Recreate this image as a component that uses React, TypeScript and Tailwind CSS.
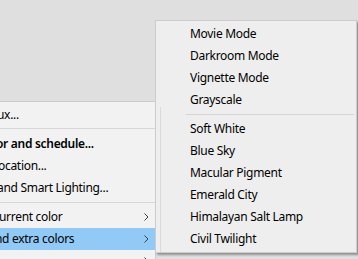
const mainItems = [
  { label: "ux...", kind: "item", indent: -3 },
  { kind: "sep", line: 2 },
  { label: "or and schedule...", kind: "item", bold: true, indent: -4 },
  { label: "ocation...", kind: "item", indent: -2 },
  { label: "and Smart Lighting...", kind: "item", indent: -3 },
  { kind: "sep", line: 3 },
  { label: "urrent color", kind: "item", sub: true, indent: -1 },
  { label: "nd extra colors", kind: "item", sub: true, active: true, indent: -5 },
  { label: "", kind: "item", sub: true },
];

const effects = ["Movie Mode", "Darkroom Mode", "Vignette Mode", "Grayscale"];
const colors = [
  "Soft White",
  "Blue Sky",
  "Macular Pigment",
  "Emerald City",
  "Himalayan Salt Lamp",
  "Civil Twilight",
];

function Chevron() {
  return (
    <svg width="5" height="8" viewBox="0 0 5 8" className="shrink-0">
      <path d="M0.5 0.5 L4 4 L0.5 7.5" fill="none" stroke="#404040" strokeWidth="1" />
    </svg>
  );
}

function SubItem({ label }: { label: string }) {
  return (
    <div className="flex h-[22px] items-center pl-[34px] text-[12px] tracking-[-0.3px] text-black">
      {label}
    </div>
  );
}

export default function App() {
  return (
    <div
      className="relative h-[259px] w-[358px] overflow-hidden bg-[#dfdfdf]"
      style={{ fontFamily: '"Noto Sans", "Open Sans", sans-serif' }}
    >
      {/* parent context menu */}
      <div className="absolute left-0 top-[101px] w-[156px] border-t border-r border-[#cccccc] bg-[#f2f2f2] pt-[2px]">
        {mainItems.map((it, i) =>
          it.kind === "sep" ? (
            <div key={i} className="h-[7px]" style={{ paddingTop: it.line }}>
              <div className="h-px bg-[#d7d7d7]" />
            </div>
          ) : (
            <div
              key={i}
              className={`flex h-[22px] items-center justify-between pr-[6px] text-[12px] tracking-[-0.3px] text-black ${
                it.active ? "bg-[#91c9f7]" : ""
              } ${it.bold ? "font-semibold" : ""}`}
            >
              <span className="whitespace-nowrap" style={{ marginLeft: it.indent ?? 0 }}>
                {it.label}
              </span>
              {it.sub && <Chevron />}
            </div>
          )
        )}
      </div>

      {/* submenu */}
      <div className="absolute left-[155px] top-[20px] h-[233px] w-[202px] border border-[#cccccc] bg-[#eeeeee] pt-[2px] shadow-[2px_2px_2px_rgba(0,0,0,0.35)]">
        {effects.map((e) => (
          <SubItem key={e} label={e} />
        ))}
        <div className="flex h-[7px] items-center pl-[30px] pr-[2px]">
          <div className="h-px w-full bg-[#d5d5d5]" />
        </div>
        {colors.map((c) => (
          <SubItem key={c} label={c} />
        ))}
        {/* parent menu's shadow falling over the submenu edge */}
        <div className="absolute left-[4px] top-[86px] bottom-0 w-px bg-[#dadada]" />
      </div>
    </div>
  );
}
